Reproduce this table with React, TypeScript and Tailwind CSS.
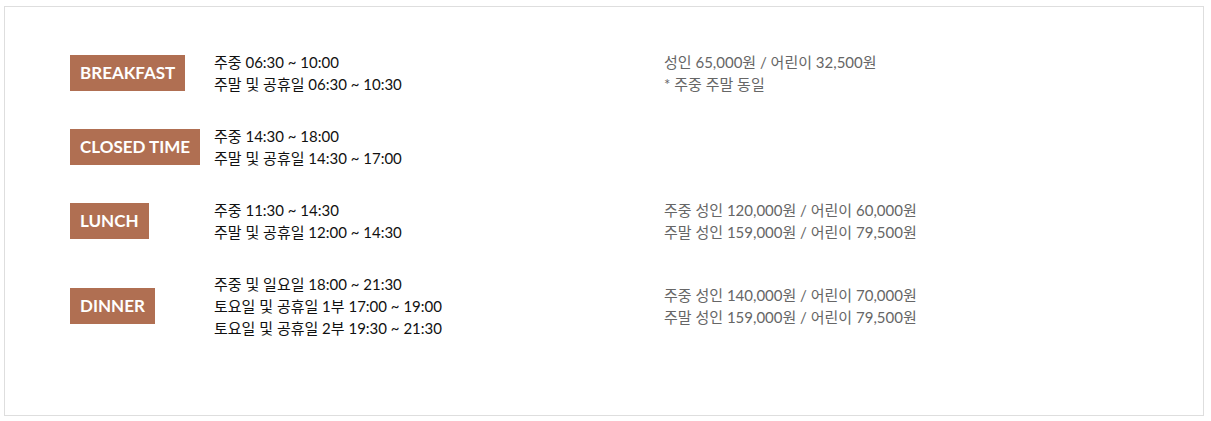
const rows = [
  {
    label: "BREAKFAST",
    times: ["주중 06:30 ~ 10:00", "주말 및 공휴일 06:30 ~ 10:30"],
    prices: ["성인 65,000원 / 어린이 32,500원", "* 주중 주말 동일"],
    pricesTop: true,
  },
  {
    label: "CLOSED TIME",
    times: ["주중 14:30 ~ 18:00", "주말 및 공휴일 14:30 ~ 17:00"],
    prices: [],
  },
  {
    label: "LUNCH",
    times: ["주중 11:30 ~ 14:30", "주말 및 공휴일 12:00 ~ 14:30"],
    prices: ["주중 성인 120,000원 / 어린이 60,000원", "주말 성인 159,000원 / 어린이 79,500원"],
  },
  {
    label: "DINNER",
    times: [
      "주중 및 일요일 18:00 ~ 21:30",
      "토요일 및 공휴일 1부 17:00 ~ 19:00",
      "토요일 및 공휴일 2부 19:30 ~ 21:30",
    ],
    prices: ["주중 성인 140,000원 / 어린이 70,000원", "주말 성인 159,000원 / 어린이 79,500원"],
  },
];

export default function App() {
  return (
    <div
      className="bg-white pt-[6px] pl-[4px] pr-[7px] pb-[5px]"
      style={{ fontFamily: "Lato, 'Noto Sans CJK KR', sans-serif" }}
    >
      <div className="h-[410px] border border-[#dedede] pl-[65px] pt-[44px]">
        <div className="flex flex-col gap-[30px]">
          {rows.map((row) => (
            <div key={row.label} className="flex items-center">
              <div className="w-[144px] shrink-0">
                <span className="inline-block h-[36px] bg-[#b06f52] px-[10px] text-[17px] leading-[36px] font-bold text-white">
                  {row.label}
                </span>
              </div>
              <div className="w-[450px] shrink-0 text-[15px] leading-[22px] text-[#111]">
                {row.times.map((t) => (
                  <div key={t}>{t}</div>
                ))}
              </div>
              <div
                className={
                  row.pricesTop
                    ? "self-start text-[15px] leading-[22px] text-[#666]"
                    : "text-[15px] leading-[22px] text-[#666]"
                }
              >
                {row.prices.map((p) => (
                  <div key={p}>{p}</div>
                ))}
              </div>
            </div>
          ))}
        </div>
      </div>
    </div>
  );
}
